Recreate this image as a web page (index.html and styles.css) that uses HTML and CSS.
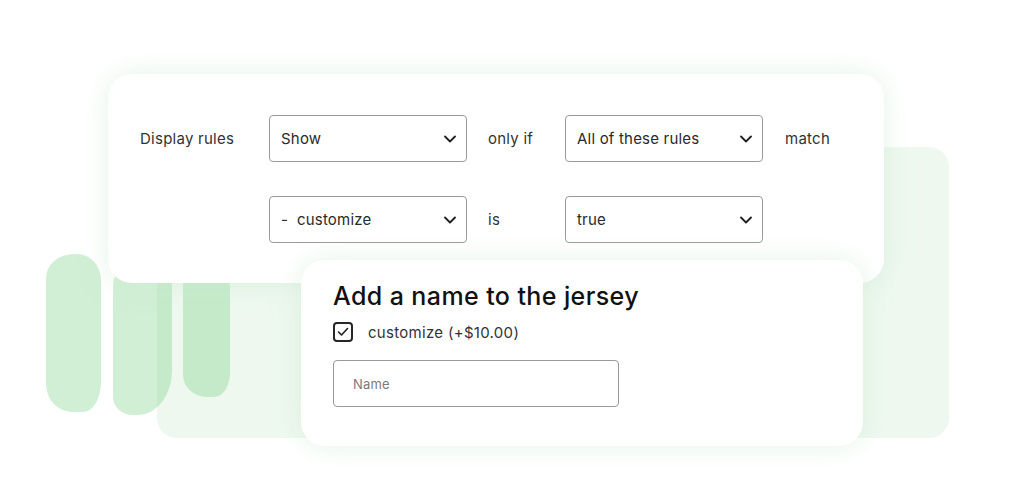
FILE: index.html
```html
<!DOCTYPE html>
<html lang="en">
<head>
    <meta charset="UTF-8">
    <meta name="viewport" content="width=device-width, initial-scale=1.0">
    <title>Display rules</title>
    <link rel="stylesheet" href="styles.css">
</head>
<body>
    <main class="stage">
        <div class="decor">
            <div class="backdrop"></div>
            <div class="blob blob1"></div>
            <div class="blob blob2"></div>
            <div class="blob blob3"></div>
        </div>

        <section class="card rules">
            <span class="label">Display rules</span>
            <div class="select">
                <span>Show</span>
                <svg width="12" height="8" viewBox="0 0 12 8"><path d="M1 1.5 L6 6.5 L11 1.5" fill="none" stroke="#1f1f1f" stroke-width="1.8" stroke-linecap="round" stroke-linejoin="round"/></svg>
            </div>
            <span class="label">only if</span>
            <div class="select">
                <span>All of these rules</span>
                <svg width="12" height="8" viewBox="0 0 12 8"><path d="M1 1.5 L6 6.5 L11 1.5" fill="none" stroke="#1f1f1f" stroke-width="1.8" stroke-linecap="round" stroke-linejoin="round"/></svg>
            </div>
            <span class="label">match</span>

            <span></span>
            <div class="select">
                <span>-&nbsp; customize</span>
                <svg width="12" height="8" viewBox="0 0 12 8"><path d="M1 1.5 L6 6.5 L11 1.5" fill="none" stroke="#1f1f1f" stroke-width="1.8" stroke-linecap="round" stroke-linejoin="round"/></svg>
            </div>
            <span class="label">is</span>
            <div class="select">
                <span>true</span>
                <svg width="12" height="8" viewBox="0 0 12 8"><path d="M1 1.5 L6 6.5 L11 1.5" fill="none" stroke="#1f1f1f" stroke-width="1.8" stroke-linecap="round" stroke-linejoin="round"/></svg>
            </div>
        </section>

        <section class="card product">
            <h1>Add a name to the jersey</h1>
            <label class="check">
                <span class="box">
                    <svg width="12" height="10" viewBox="0 0 12 10"><path d="M1.5 5 L4.5 8 L10.5 1.5" fill="none" stroke="#1f1f1f" stroke-width="1.6" stroke-linecap="round" stroke-linejoin="round"/></svg>
                </span>
                customize (+$10.00)
            </label>
            <div class="input">Name</div>
        </section>
    </main>
</body>
</html>
```

FILE: styles.css
```css
* {
    box-sizing: border-box;
    margin: 0;
    padding: 0;
}

body {
    background-color: #ffffff;
    font-family: Inter, "Noto Sans", sans-serif;
    color: #2e2e2e;
}

.stage {
    position: relative;
    width: 1024px;
    height: 503px;
    overflow: hidden;
    padding: 74px 0 0 108px;
}

/* background shapes */
.decor {
    position: absolute;
    inset: 0;
    z-index: 0;
}

.backdrop {
    position: absolute;
    left: 157px;
    top: 147px;
    width: 792px;
    height: 291px;
    border-radius: 20px;
    background-color: #eef8ef;
}

.blob {
    position: absolute;
    background-color: rgba(120, 210, 135, 0.35);
}

.blob1 {
    left: 46px;
    top: 254px;
    width: 55px;
    height: 158px;
    border-radius: 28px 24px 18px 26px / 24px 26px 30px 28px;
}

.blob2 {
    left: 113px;
    top: 262px;
    width: 59px;
    height: 153px;
    border-radius: 24px 26px 34px 20px / 24px 24px 44px 18px;
}

.blob3 {
    left: 183px;
    top: 262px;
    width: 47px;
    height: 135px;
    border-radius: 22px 22px 16px 24px / 20px 24px 24px 22px;
}

.card {
    position: relative;
    z-index: 1;
    background-color: #ffffff;
    border-radius: 24px;
    box-shadow: 0 0 26px rgba(205, 235, 210, 0.55);
}

.rules {
    width: 776px;
    height: 209px;
    padding: 41px 0 0 32px;
    display: grid;
    grid-template-columns: 129px 219px 77px 220px auto;
    grid-template-rows: 47px 47px;
    row-gap: 34px;
    align-items: center;
}

.label {
    font-size: 15px;
    letter-spacing: 0.25px;
    color: #333333;
}

.select {
    width: 198px;
    height: 47px;
    border: 1.5px solid #9a9a9a;
    border-radius: 4px;
    padding: 0 10px 0 11px;
    display: flex;
    align-items: center;
    justify-content: space-between;
    font-size: 15px;
    letter-spacing: 0.2px;
    color: #2a2a2a;
}

.product {
    z-index: 2;
    width: 562px;
    height: 186px;
    margin: -23px 0 0 193px;
    padding: 21px 32px 0;
    display: flex;
    flex-direction: column;
}

.product h1 {
    font-size: 25px;
    font-weight: 500;
    line-height: 30px;
    color: #111111;
    letter-spacing: 0.4px;
}

.check {
    display: flex;
    align-items: center;
    gap: 15px;
    margin-top: 11px;
    font-size: 15px;
    letter-spacing: 0.3px;
    color: #333333;
}

.box {
    width: 20px;
    height: 20px;
    border: 2px solid #262626;
    border-radius: 4px;
    display: flex;
    align-items: center;
    justify-content: center;
}

.input {
    margin-top: 18px;
    width: 286px;
    height: 47px;
    border: 1.5px solid #9a9a9a;
    border-radius: 4px;
    padding-left: 19px;
    display: flex;
    align-items: center;
    font-size: 13px;
    letter-spacing: 0.2px;
    color: #7a7a7a;
}
```
